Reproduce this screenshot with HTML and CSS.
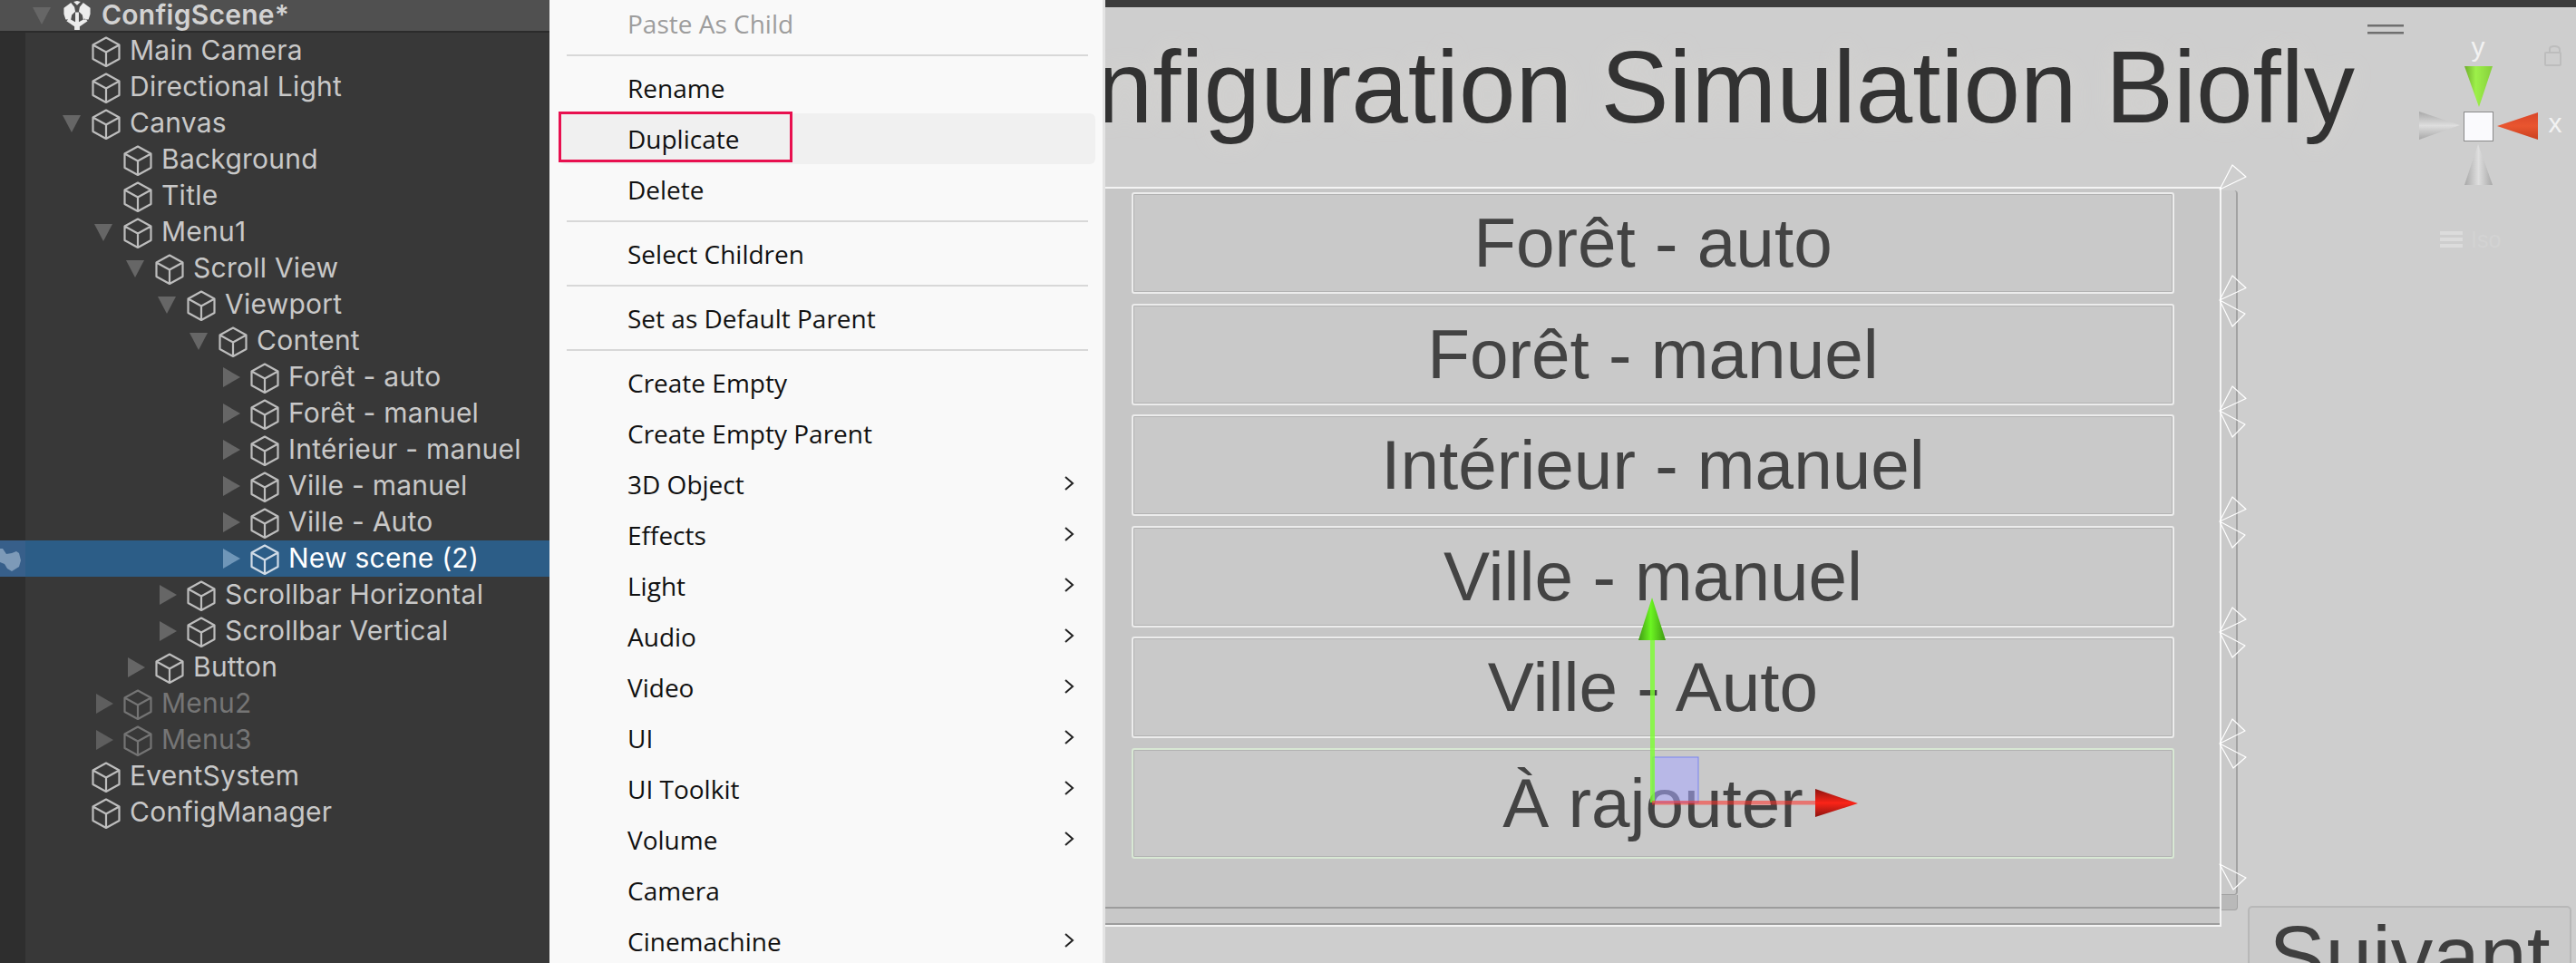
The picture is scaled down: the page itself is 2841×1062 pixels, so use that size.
FILE: index.html
```html
<!DOCTYPE html>
<html lang="fr">
<head>
<meta charset="UTF-8">
<title>ConfigScene</title>
<link rel="stylesheet" href="styles.css">
</head>
<body>
<svg class="defs" width="0" height="0">
    <symbol id="cube" viewBox="0 0 32 34">
        <path d="M16 1.5 30.5 9.5V25L16 33 1.5 25V9.5ZM1.5 9.5 16 17.5 30.5 9.5M16 17.5V33" fill="none" stroke="currentColor" stroke-width="2.2" stroke-linejoin="round"/>
    </symbol>
    <symbol id="chev" viewBox="0 0 12 16">
        <path d="M2 1 10 8 2 15" fill="none" stroke="currentColor" stroke-width="2"/>
    </symbol>
</svg>

<div class="hierarchy">
    <div class="scene-head">
        <span class="arrow down"></span>
        <svg class="unity-icon" viewBox="0 0 30 34">
            <path d="M0 8 8 2 12 7 13 12 9 16 8 21H2L0 15ZM30 8 22 2 18 7 17 12 21 16 22 21H28L30 15ZM11 1 15 0 19 1 15 5ZM13 13H17V24L24 20 27 23 18 29V33H12V29L3 23 6 20 13 24Z" fill="#ececec"/>
        </svg>
        <span class="scene-name">ConfigScene*</span>
    </div>
    <div class="tree">
        <div class="row lv0"><span class="slot"></span><svg class="cube"><use href="#cube"/></svg><span>Main Camera</span></div>
        <div class="row lv0"><span class="slot"></span><svg class="cube"><use href="#cube"/></svg><span>Directional Light</span></div>
        <div class="row lv0"><span class="slot"><span class="arrow down"></span></span><svg class="cube"><use href="#cube"/></svg><span>Canvas</span></div>
        <div class="row lv1"><span class="slot"></span><svg class="cube"><use href="#cube"/></svg><span>Background</span></div>
        <div class="row lv1"><span class="slot"></span><svg class="cube"><use href="#cube"/></svg><span>Title</span></div>
        <div class="row lv1"><span class="slot"><span class="arrow down"></span></span><svg class="cube"><use href="#cube"/></svg><span>Menu1</span></div>
        <div class="row lv2"><span class="slot"><span class="arrow down"></span></span><svg class="cube"><use href="#cube"/></svg><span>Scroll View</span></div>
        <div class="row lv3"><span class="slot"><span class="arrow down"></span></span><svg class="cube"><use href="#cube"/></svg><span>Viewport</span></div>
        <div class="row lv4"><span class="slot"><span class="arrow down"></span></span><svg class="cube"><use href="#cube"/></svg><span>Content</span></div>
        <div class="row lv5"><span class="slot"><span class="arrow right"></span></span><svg class="cube"><use href="#cube"/></svg><span>Forêt - auto</span></div>
        <div class="row lv5"><span class="slot"><span class="arrow right"></span></span><svg class="cube"><use href="#cube"/></svg><span>Forêt - manuel</span></div>
        <div class="row lv5"><span class="slot"><span class="arrow right"></span></span><svg class="cube"><use href="#cube"/></svg><span>Intérieur - manuel</span></div>
        <div class="row lv5"><span class="slot"><span class="arrow right"></span></span><svg class="cube"><use href="#cube"/></svg><span>Ville - manuel</span></div>
        <div class="row lv5"><span class="slot"><span class="arrow right"></span></span><svg class="cube"><use href="#cube"/></svg><span>Ville - Auto</span></div>
        <div class="row lv5 selected">
            <svg class="hand" viewBox="0 0 23 40"><path d="M0 9 3 9 7 15 13 14 18 12 21 14 23 22 21 29 13 34 8 31 5 26 0 24Z" fill="#7d9ab8"/></svg>
            <span class="slot"><span class="arrow right"></span></span><svg class="cube"><use href="#cube"/></svg><span>New scene (2)</span>
        </div>
        <div class="row lv3"><span class="slot"><span class="arrow right"></span></span><svg class="cube"><use href="#cube"/></svg><span>Scrollbar Horizontal</span></div>
        <div class="row lv3"><span class="slot"><span class="arrow right"></span></span><svg class="cube"><use href="#cube"/></svg><span>Scrollbar Vertical</span></div>
        <div class="row lv2"><span class="slot"><span class="arrow right"></span></span><svg class="cube"><use href="#cube"/></svg><span>Button</span></div>
        <div class="row lv1 off"><span class="slot"><span class="arrow right"></span></span><svg class="cube"><use href="#cube"/></svg><span>Menu2</span></div>
        <div class="row lv1 off"><span class="slot"><span class="arrow right"></span></span><svg class="cube"><use href="#cube"/></svg><span>Menu3</span></div>
        <div class="row lv0"><span class="slot"></span><svg class="cube"><use href="#cube"/></svg><span>EventSystem</span></div>
        <div class="row lv0"><span class="slot"></span><svg class="cube"><use href="#cube"/></svg><span>ConfigManager</span></div>
    </div>
</div>

<div class="menu">
    <div class="item disabled">Paste As Child</div>
    <div class="sep"></div>
    <div class="item">Rename</div>
    <div class="item hover">Duplicate<span class="callout"></span></div>
    <div class="item">Delete</div>
    <div class="sep"></div>
    <div class="item">Select Children</div>
    <div class="sep"></div>
    <div class="item">Set as Default Parent</div>
    <div class="sep"></div>
    <div class="item">Create Empty</div>
    <div class="item">Create Empty Parent</div>
    <div class="item">3D Object<svg class="chev"><use href="#chev"/></svg></div>
    <div class="item">Effects<svg class="chev"><use href="#chev"/></svg></div>
    <div class="item">Light<svg class="chev"><use href="#chev"/></svg></div>
    <div class="item">Audio<svg class="chev"><use href="#chev"/></svg></div>
    <div class="item">Video<svg class="chev"><use href="#chev"/></svg></div>
    <div class="item">UI<svg class="chev"><use href="#chev"/></svg></div>
    <div class="item">UI Toolkit<svg class="chev"><use href="#chev"/></svg></div>
    <div class="item">Volume<svg class="chev"><use href="#chev"/></svg></div>
    <div class="item">Camera</div>
    <div class="item">Cinemachine<svg class="chev"><use href="#chev"/></svg></div>
</div>

<div class="scene">
    <div class="scene-top"></div>
    <div class="title"><span>Configuration Simulation Biofly</span></div>
    <div class="scroll">
        <div class="view">
            <div class="content">
                <div class="btn">Forêt - auto</div>
                <div class="btn">Forêt - manuel</div>
                <div class="btn">Intérieur - manuel</div>
                <div class="btn">Ville - manuel</div>
                <div class="btn">Ville - Auto</div>
                <div class="btn last">À rajouter</div>
            </div>
            <div class="hbar"></div>
        </div>
        <div class="vbar">
            <div class="vthumb"></div>
            <div class="vcorner"></div>
        </div>
    </div>
    <div class="suivant">Suivant</div>

    <!-- gizmos, in page coordinates -->
    <svg class="gizmos" viewBox="1219 0 1622 1062">
        <defs>
            <linearGradient id="gGreen" x1="0" x2="1" y1="0" y2="0"><stop offset="0" stop-color="#6fae2c"/><stop offset=".4" stop-color="#9df04a"/><stop offset="1" stop-color="#86cf3c"/></linearGradient>
            <linearGradient id="gRed" x1="0" x2="0" y1="0" y2="1"><stop offset="0" stop-color="#d9472a"/><stop offset=".5" stop-color="#e9552f"/><stop offset="1" stop-color="#c9401f"/></linearGradient>
            <linearGradient id="gGreyH" x1="0" x2="0" y1="0" y2="1"><stop offset="0" stop-color="#a8a8a8"/><stop offset=".5" stop-color="#dedede"/><stop offset="1" stop-color="#a8a8a8"/></linearGradient>
            <linearGradient id="gGreyV" x1="0" x2="1" y1="0" y2="0"><stop offset="0" stop-color="#a8a8a8"/><stop offset=".5" stop-color="#dedede"/><stop offset="1" stop-color="#a8a8a8"/></linearGradient>
            <linearGradient id="mGreen" x1="0" x2="1" y1="0" y2="0"><stop offset="0" stop-color="#3f9a12"/><stop offset=".45" stop-color="#6cf522"/><stop offset="1" stop-color="#3f9a12"/></linearGradient>
            <linearGradient id="mRed" x1="0" x2="0" y1="0" y2="1"><stop offset="0" stop-color="#8c1410"/><stop offset=".5" stop-color="#fa2418"/><stop offset="1" stop-color="#8c1410"/></linearGradient>
        </defs>

        <g fill="none" stroke="#fff" stroke-width="1.2" stroke-linejoin="round">
            <path d="M2448 209 2462 182 2477 195Z"/>
            <path d="M2448 331 2462 304 2477 317.500ZM2448 331 2476 346 2462 360Z"/>
            <path d="M2448 453 2462 426 2477 439.500ZM2448 453 2476 468 2462 482Z"/>
            <path d="M2448 575 2462 548 2477 561.500ZM2448 575 2476 590 2462 604Z"/>
            <path d="M2448 697 2462 670 2477 683ZM2448 697 2476 712 2462 725Z"/>
            <path d="M2448 820 2462 793 2476 806ZM2448 820 2477 835 2463 847Z"/>
            <path d="M2448 953 2477 968 2463 981Z"/>
        </g>

        <rect x="1823" y="835" width="50" height="50" fill="#aaaaff" fill-opacity=".55" stroke="#7a85f0" stroke-width="1"/>
        <rect x="1820" y="706" width="5" height="179" fill="#7cff30" fill-opacity=".8"/>
        <rect x="1822" y="883" width="180" height="4.500" fill="#ff3028" fill-opacity=".55"/>
        <path d="M1822 659 1837 706H1807Z" fill="url(#mGreen)"/>
        <path d="M2002 870 2049 886 2002 901Z" fill="url(#mRed)"/>

        <rect x="2611" y="27" width="40" height="2.500" fill="#6f6f6f"/>
        <rect x="2611" y="35" width="40" height="2.500" fill="#6f6f6f"/>

        <path d="M2718 73H2749L2734 118Z" fill="url(#gGreen)"/>
        <path d="M2799 124V154L2754 139Z" fill="url(#gRed)"/>
        <path d="M2668 123V154L2713 138Z" fill="url(#gGreyH)"/>
        <path d="M2733 159 2749 204H2718Z" fill="url(#gGreyV)"/>
        <rect x="2717.500" y="123.500" width="32" height="32" fill="#fafafd" stroke="#8a8a8a" stroke-width="1"/>
        <text class="axis" x="2733" y="62" text-anchor="middle">y</text>
        <text class="axis" x="2818" y="146" text-anchor="middle">x</text>

        <g fill="none" stroke="#bdbdbd" stroke-width="2">
            <rect x="2807" y="58" width="17" height="14" rx="1"/>
            <path d="M2812 58V54Q2812 51 2817 51Q2823 51 2823 55V58"/>
        </g>

        <g fill="#dcdcdc">
            <rect x="2691" y="255" width="25" height="4"/>
            <rect x="2691" y="262" width="25" height="4"/>
            <rect x="2691" y="269" width="25" height="4"/>
        </g>
        <text class="iso" x="2725" y="273">Iso</text>
    </svg>
</div>
</body>
</html>
```

FILE: styles.css
```css
* {
    box-sizing: border-box;
}
html, body {
    margin: 0;
    height: 1062px;
    overflow: hidden;
}
body {
    display: flex;
    background-color: #383838;
}
.defs {
    position: absolute;
}

/* hierarchy */
.hierarchy {
    width: 606px;
    flex: none;
    height: 1062px;
    font-family: 'Inter', sans-serif;
    font-size: 30px;
    letter-spacing: .25px;
    color: #c8c8c8;
    background: linear-gradient(to right, #2e2e2e 28px, #383838 28px);
}
.scene-head {
    display: flex;
    align-items: center;
    height: 36px;
    padding-left: 33px;
    background-color: #505050;
    border-bottom: 2px solid #2b2b2b;
}
.scene-head .arrow {
    margin: 0 14px 0 0;
    border-left-width: 11px;
    border-right-width: 11px;
    border-top-color: #6f6f6f;
}
.unity-icon {
    width: 30px;
    height: 33px;
    margin-right: 12px;
}
.scene-name {
    font-weight: 600;
    color: #d2d2d2;
    padding-bottom: 3px;
}
.row {
    position: relative;
    display: flex;
    align-items: center;
    height: 40px;
    white-space: nowrap;
}
.row > span:last-child {
    padding-bottom: 3px;
}
.lv0 { padding-left: 66px; }
.lv1 { padding-left: 101px; }
.lv2 { padding-left: 136px; }
.lv3 { padding-left: 171px; }
.lv4 { padding-left: 206px; }
.lv5 { padding-left: 241px; }
.slot {
    width: 35px;
    flex: none;
    display: flex;
    align-items: center;
}
.arrow {
    display: inline-block;
    width: 0;
    height: 0;
}
.arrow.down {
    margin-left: 3px;
    border-left: 10px solid transparent;
    border-right: 10px solid transparent;
    border-top: 19px solid #666;
}
.arrow.right {
    margin-left: 5px;
    border-top: 11px solid transparent;
    border-bottom: 11px solid transparent;
    border-left: 19px solid #666;
}
.cube {
    width: 32px;
    height: 34px;
    flex: none;
    margin-right: 10px;
    margin-top: 1px;
    color: #bdbdbd;
}
.row.selected {
    background: linear-gradient(to right, #375f8a 28px, #2c5d87 28px);
    color: #fff;
}
.row.selected .cube {
    color: #d0dbe6;
}
.row.selected .arrow {
    border-left-color: #6f96b8;
}
.hand {
    position: absolute;
    left: 0;
    top: 0;
    width: 23px;
    height: 40px;
}
.row.off {
    color: #757575;
}
.row.off .cube {
    color: #747474;
}
.row.off .arrow {
    border-left-color: #5e5e5e;
}

/* context menu */
.menu {
    width: 613px;
    flex: none;
    height: 1062px;
    overflow: hidden;
    background-color: #f9f9f9;
    border-right: 3px solid #e4e4e4;
    font-family: 'Open Sans', sans-serif;
    font-size: 28px;
    color: #111;
}
.item {
    position: relative;
    display: flex;
    align-items: center;
    height: 56px;
    margin: 0 8px 0 11px;
    padding: 0 0 1px 75px;
    border-radius: 6px;
    white-space: nowrap;
}
.item:first-child {
    margin-top: -2px;
}
.item.disabled {
    color: #9d9d9d;
}
.item.hover {
    background-color: #f0f0f0;
}
.callout {
    position: absolute;
    left: -1px;
    top: -2px;
    width: 258px;
    height: 56px;
    border: 3px solid #e8104f;
}
.chev {
    position: absolute;
    right: 23px;
    top: 19px;
    width: 12px;
    height: 16px;
    color: #222;
}
.sep {
    height: 15px;
    padding-top: 6px;
    margin: 0 16px 0 19px;
}
.sep::before {
    content: "";
    display: block;
    height: 2px;
    background-color: #d8d8d8;
}

/* scene view */
.scene {
    position: relative;
    flex: 1;
    height: 1062px;
    overflow: hidden;
    background-color: #cecece;
    font-family: 'Liberation Sans', sans-serif;
}
.scene-top {
    height: 8px;
    background-color: #3c3c3c;
}
.title {
    display: flex;
    justify-content: flex-end;
    height: 198px;
    padding: 24px 244px 0 0;
    font-size: 112.500px;
    line-height: 129px;
    color: #323232;
    white-space: nowrap;
    text-shadow: 0 0 24px #d6d4d0;
}
.scroll {
    display: flex;
    height: 816px;
}
.view {
    display: flex;
    flex-direction: column;
    width: 1231px;
    background-color: #c6c6c6;
    border: 2px solid #f4f4f4;
    border-left: none;
}
.content {
    flex: 1;
    display: flex;
    flex-direction: column;
    gap: 10.500px;
    padding: 4px 50px 0 29px;
}
.btn {
    display: flex;
    align-items: center;
    justify-content: center;
    height: 112px;
    flex: none;
    background-color: #c9c9c9;
    border: 2px solid #ececec;
    box-shadow: inset 0 0 0 1px #b2b2b2;
    border-radius: 3px;
    font-size: 76.500px;
    color: #434343;
}
.btn.last {
    height: 122px;
    border-color: #d8e8d4;
}
.hbar {
    height: 20px;
    background-color: #c8c8c8;
    border-top: 2px solid #9c9c9c;
    border-bottom: 2px solid #9c9c9c;
}
.vbar {
    display: flex;
    flex-direction: column;
    width: 18px;
    margin-top: 4px;
    height: 812px;
}
.vthumb {
    height: 777px;
    background-color: #c9c9c9;
    border-right: 2px solid #a2a2a2;
    border-bottom: 1px solid #a2a2a2;
    border-radius: 0 4px 4px 0;
}
.vcorner {
    height: 17px;
    background-color: #b9b9b9;
    border-right: 1px solid #a2a2a2;
    border-bottom: 1px solid #a2a2a2;
    border-radius: 0 0 4px 0;
}
.suivant {
    position: absolute;
    left: 1260px;
    top: 999px;
    width: 357px;
    height: 130px;
    text-align: center;
    font-size: 93px;
    color: #3f3f3f;
    background-color: #cacaca;
    border: 2px solid #b8b8b8;
    border-radius: 5px;
}
.gizmos {
    position: absolute;
    left: 0;
    top: 0;
    width: 1622px;
    height: 1062px;
}
.axis {
    font-family: 'Liberation Sans', sans-serif;
    font-size: 30px;
    fill: #f2f2f2;
}
.iso {
    font-family: 'Liberation Sans', sans-serif;
    font-size: 25px;
    fill: #d3d3d3;
}
```
